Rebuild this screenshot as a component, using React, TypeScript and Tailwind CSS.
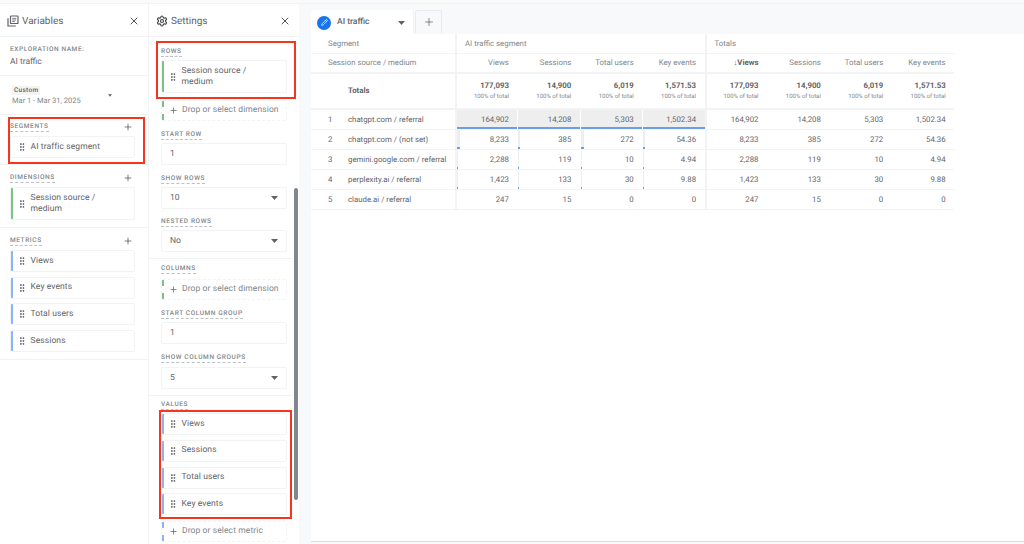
import { GripVertical, Pencil, Plus, Settings, X } from 'lucide-react';

const Label = ({ children }: { children: string }) => (
  <div className="flex">
    <span className="text-[6.5px] leading-[9px] font-medium tracking-[0.6px] text-[#80868b] border-b border-dashed border-[#bdc1c6]">
      {children}
    </span>
  </div>
);

const Caret = () => (
  <svg width="7" height="4" viewBox="0 0 7 4" className="shrink-0">
    <path d="M0 0h7L3.5 4z" fill="#5f6368" />
  </svg>
);

function Chip({ text, color, h = 'h-[22px]' }: { text: string; color?: string; h?: string }) {
  return (
    <div className={`flex items-center bg-white border border-[#f1f3f4] rounded-[2px] overflow-hidden ${h}`}>
      <div className={`w-[2px] self-stretch shrink-0 ${color ?? ''}`} />
      <GripVertical size={10} strokeWidth={2.4} className="ml-[4px] mr-[3.5px] text-[#5f6368] shrink-0" />
      <span className="max-w-[78px] text-[8.5px] leading-[11px] text-[#5f6368] tracking-[0.1px]">{text}</span>
    </div>
  );
}

function DropZone({ text, color }: { text: string; color: string }) {
  return (
    <div className="flex items-center h-[21px] border border-dashed border-[#f1f3f4] rounded-[2px]">
      <div className={`w-0 self-stretch border-l-2 border-dashed ${color}`} />
      <Plus size={9} strokeWidth={2} className="ml-[5px] mr-[4px] text-[#5f6368]" />
      <span className="text-[8.5px] text-[#80868b] tracking-[0.1px]">{text}</span>
    </div>
  );
}

function Field({ value, select }: { value: string; select?: boolean }) {
  return (
    <div className="flex items-center justify-between h-[22px] pl-[8px] pr-[8px] bg-white border border-[#f1f3f4] rounded-[2px]">
      <span className="text-[8.5px] text-[#5f6368]">{value}</span>
      {select && <Caret />}
    </div>
  );
}

function PanelHeader({ icon, title }: { icon: React.ReactNode; title: string }) {
  return (
    <div className="flex items-center justify-between h-[33px] pt-[2px] pl-[7px] pr-[8px] border-b border-[#f1f3f4]">
      <div className="flex items-center gap-[3px]">
        {icon}
        <span className="text-[10px] text-[#5f6368]">{title}</span>
      </div>
      <X size={12} strokeWidth={1.8} className="text-[#3c4043]" />
    </div>
  );
}

const LibraryIcon = () => (
  <svg width="12" height="12" viewBox="0 0 12 12" fill="none" stroke="#5f6368" strokeWidth="1.2">
    <rect x="3.5" y="1" width="7.5" height="7.5" rx="0.6" />
    <path d="M1 3.2V11h7.8" />
    <path d="M5.2 3.4h4M5.2 5h4M5.2 6.5h2.6" strokeWidth="0.8" />
  </svg>
);

function VariablesPanel() {
  return (
    <div className="w-[149px] shrink-0 border-r border-[#f1f3f4] bg-white">
      <PanelHeader icon={<LibraryIcon />} title="Variables" />
      <div className="h-[39px] px-[10px] pt-[8px] border-b border-[#f1f3f4]">
        <div className="text-[6.5px] leading-[9px] font-medium tracking-[0.6px] text-[#80868b]">EXPLORATION NAME:</div>
        <div className="text-[8.5px] leading-[12px] mt-[2px] text-[#5f6368]">AI traffic</div>
      </div>
      <div className="h-[39px] pl-[12px] pr-[36px] border-b border-[#f1f3f4] flex items-center justify-between">
        <div>
          <div className="w-fit bg-[#f1f3f4] px-[2px] mt-[1px] text-[6.5px] leading-[9px] font-medium tracking-[0.3px] text-[#5f6368]">Custom</div>
          <div className="text-[7.5px] leading-[11px] text-[#80868b]">Mar 1 - Mar 31, 2025</div>
        </div>
        <svg width="4" height="3" viewBox="0 0 7 4"><path d="M0 0h7L3.5 4z" fill="#5f6368" /></svg>
      </div>
      <div className="h-[50px] pl-[10px] pr-[13px] pt-[5px] border-b border-[#f1f3f4]">
        <div className="flex items-center justify-between h-[14px]">
          <Label>SEGMENTS</Label>
          <Plus size={10} className="text-[#5f6368] mr-[2px]" />
        </div>
        <div className="mt-[2px]">
          <Chip text="AI traffic segment" />
        </div>
      </div>
      <div className="h-[63px] pl-[10px] pr-[13px] pt-[6px] border-b border-[#f1f3f4]">
        <div className="flex items-center justify-between h-[14px]">
          <Label>DIMENSIONS</Label>
          <Plus size={10} className="text-[#5f6368] mr-[2px]" />
        </div>
        <div className="mt-[2px]">
          <Chip text="Session source / medium" color="bg-[#7cc284]" h="h-[33px]" />
        </div>
      </div>
      <div className="h-[132px] pl-[10px] pr-[13px] pt-[6px] border-b border-[#f1f3f4]">
        <div className="flex items-center justify-between h-[14px] mb-[2px]">
          <Label>METRICS</Label>
          <Plus size={10} className="text-[#5f6368] mr-[2px]" />
        </div>
        <div className="flex flex-col gap-[4.7px]">
          {['Views', 'Key events', 'Total users', 'Sessions'].map((m) => (
            <Chip key={m} text={m} color="bg-[#8ab4f8]" />
          ))}
        </div>
      </div>
    </div>
  );
}

function SettingsPanel() {
  return (
    <div className="relative w-[150px] shrink-0 bg-white overflow-hidden">
      <PanelHeader icon={<Settings size={12} strokeWidth={2.2} className="text-[#3c4043]" />} title="Settings" />
      <div className="pl-[12px] pr-[12px] pt-[10px]">
        <Label>ROWS</Label>
        <div className="mt-[3px]">
          <Chip text="Session source / medium" color="bg-[#7cc284]" h="h-[33px]" />
        </div>
        <div className="mt-[7px]">
          <DropZone text="Drop or select dimension" color="border-[#7cc284]" />
        </div>
        <div className="mt-[9px]"><Label>START ROW</Label></div>
        <div className="mt-[3px]"><Field value="1" /></div>
        <div className="mt-[9px]"><Label>SHOW ROWS</Label></div>
        <div className="mt-[3px]"><Field value="10" select /></div>
        <div className="mt-[8px]"><Label>NESTED ROWS</Label></div>
        <div className="mt-[3px]"><Field value="No" select /></div>
      </div>
      <div className="h-px bg-[#f1f3f4] mt-[6px] mr-[6px]" />
      <div className="pl-[12px] pr-[12px] pt-[5px]">
        <Label>COLUMNS</Label>
        <div className="mt-[5px]">
          <DropZone text="Drop or select dimension" color="border-[#7cc284]" />
        </div>
        <div className="mt-[9px]"><Label>START COLUMN GROUP</Label></div>
        <div className="mt-[3px]"><Field value="1" /></div>
        <div className="mt-[9px]"><Label>SHOW COLUMN GROUPS</Label></div>
        <div className="mt-[4px]"><Field value="5" select /></div>
      </div>
      <div className="h-px bg-[#f1f3f4] mt-[6px] mr-[6px]" />
      <div className="pl-[12px] pr-[12px] pt-[4px]">
        <Label>VALUES</Label>
        <div className="flex flex-col gap-[4.7px] mt-[3.3px]">
          {['Views', 'Sessions', 'Total users', 'Key events'].map((m) => (
            <Chip key={m} text={m} color="bg-[#8ab4f8]" />
          ))}
        </div>
        <div className="mt-[5.5px]">
          <DropZone text="Drop or select metric" color="border-[#8ab4f8]" />
        </div>
      </div>
      {/* scrollbar thumb */}
      <div className="absolute left-[145px] top-[184px] w-[4px] h-[312px] rounded-full bg-[#80868b]" />
    </div>
  );
}

const metricCols = ['Views', 'Sessions', 'Total users', 'Key events'];
const totals = ['177,093', '14,900', '6,019', '1,571.53'];
const rows = [
  { n: 1, name: 'chatgpt.com / referral', vals: ['164,902', '14,208', '5,303', '1,502.34'] },
  { n: 2, name: 'chatgpt.com / (not set)', vals: ['8,233', '385', '272', '54.36'] },
  { n: 3, name: 'gemini.google.com / referral', vals: ['2,288', '119', '10', '4.94'] },
  { n: 4, name: 'perplexity.ai / referral', vals: ['1,423', '133', '30', '9.88'] },
  { n: 5, name: 'claude.ai / referral', vals: ['247', '15', '0', '0'] },
];
// share of the column total per row, used for the heat cells
const heat = [
  [100, 100, 100, 100],
  [5, 2.7, 5, 3.5],
  [1.4, 0.8, 0.2, 0.3],
  [0.9, 0.9, 0.6, 0.6],
  [0, 0, 0, 0],
];

const gridCols = 'grid grid-cols-[144px_repeat(8,62.4px)]';

function ReportTable() {
  return (
    <div className="text-[7.8px] text-[#80868b] w-[643px]">
      <div className={`${gridCols} h-[20px] border-b border-[#f1f3f4] items-center`}>
        <div className="pl-[17px]">Segment</div>
        <div className="col-span-4 pl-[8px] border-l-2 border-[#f1f3f4] h-full flex items-center">AI traffic segment</div>
        <div className="col-span-4 pl-[8px] border-l-2 border-[#f1f3f4] h-full flex items-center">Totals</div>
      </div>
      <div className={`${gridCols} h-[20px] border-b-2 border-[#f1f3f4] items-center`}>
        <div className="pl-[17px]">Session source / medium</div>
        {[...metricCols, ...metricCols].map((m, i) => (
          <div
            key={i}
            className={`h-full flex items-center justify-end pr-[8.5px] ${i % 4 === 0 ? 'border-l-2 border-[#f1f3f4]' : ''}`}
          >
            {i === 4 ? <span className="font-bold text-[#5f6368]">↓Views</span> : m}
          </div>
        ))}
      </div>
      <div className={`${gridCols} h-[36px] border-b-2 border-[#f1f3f4] items-center`}>
        <div className="pl-[37px] font-bold text-[#5f6368]">Totals</div>
        {[...totals, ...totals].map((t, i) => (
          <div
            key={i}
            className={`h-full flex flex-col justify-center items-end pr-[8.5px] ${i % 4 === 0 ? 'border-l-2 border-[#f1f3f4]' : ''}`}
          >
            <span className="font-bold text-[#5f6368] leading-[12px]">{t}</span>
            <span className="text-[6px] leading-[10px]">100% of total</span>
          </div>
        ))}
      </div>
      {rows.map((r, ri) => (
        <div key={r.n} className={`${gridCols} h-[20px] border-b border-[#f1f3f4] items-center text-[#5f6368]`}>
          <div className="flex items-center">
            <span className="w-[37px] pl-[17px]">{r.n}</span>
            <span>{r.name}</span>
          </div>
          {[...r.vals, ...r.vals].map((v, i) => {
            const share = i < 4 ? heat[ri][i] : 0;
            return (
              <div
                key={i}
                className={`relative h-full flex items-center justify-end pr-[8.5px] ${i % 4 === 0 ? 'border-l-2 border-[#f1f3f4]' : i < 4 ? 'border-l border-white' : ''}`}
              >
                {share > 0 && (
                  <>
                    <div className="absolute inset-y-0 left-0 bg-[#eeeeee]" style={{ width: `${share}%` }} />
                    <div className="absolute bottom-0 left-0 h-[2px] bg-[#6c9eeb]" style={{ width: `${share}%` }} />
                  </>
                )}
                <span className="relative">{v}</span>
              </div>
            );
          })}
        </div>
      ))}
    </div>
  );
}

function Annotation({ className }: { className: string }) {
  return <div className={`absolute border-2 border-[#f4361e] pointer-events-none ${className}`} />;
}

export default function App() {
  return (
    <div className="relative w-[1024px] h-[544px] overflow-hidden bg-white font-['Roboto',sans-serif] [text-rendering:geometricPrecision]">
      <div className="h-[4px] bg-[#fafafa] border-b border-[#f1f3f4]" />
      <div className="flex h-[540px]">
        <VariablesPanel />
        <SettingsPanel />
        <div className="flex-1 flex flex-col bg-[#f8f9fa] pl-[12px] pb-[2px]">
          <div className="flex items-end h-[30px] shrink-0">
            <div className="flex items-center justify-between w-[103px] h-[24px] pt-[1px] bg-white rounded-t-[3px] pl-[6px] pr-[8px] border-r border-[#f1f3f4]">
              <div className="flex items-center gap-[6px]">
                <div className="w-[14px] h-[14px] rounded-full bg-[#1a73e8] flex items-center justify-center">
                  <Pencil size={7} strokeWidth={2.4} className="text-white" />
                </div>
                <span className="text-[8.5px] font-medium text-[#5f6368]">AI traffic</span>
              </div>
              <Caret />
            </div>
            <div className="flex items-center justify-center w-[27px] h-[23px] mb-[1px] ml-[1px] bg-[#f8f9fa] border border-b-0 border-[#e8eaed] rounded-t-[3px]">
              <Plus size={12} strokeWidth={1.5} className="text-[#5f6368]" />
            </div>
          </div>
          <div className="flex-1 bg-white border-b border-[#dadce0]">
            <ReportTable />
          </div>
        </div>
      </div>
      <Annotation className="left-[8px] top-[117px] w-[137px] h-[47px]" />
      <Annotation className="left-[156px] top-[41px] w-[140px] h-[58px]" />
      <Annotation className="left-[159px] top-[410px] w-[133px] h-[109px]" />
    </div>
  );
}
